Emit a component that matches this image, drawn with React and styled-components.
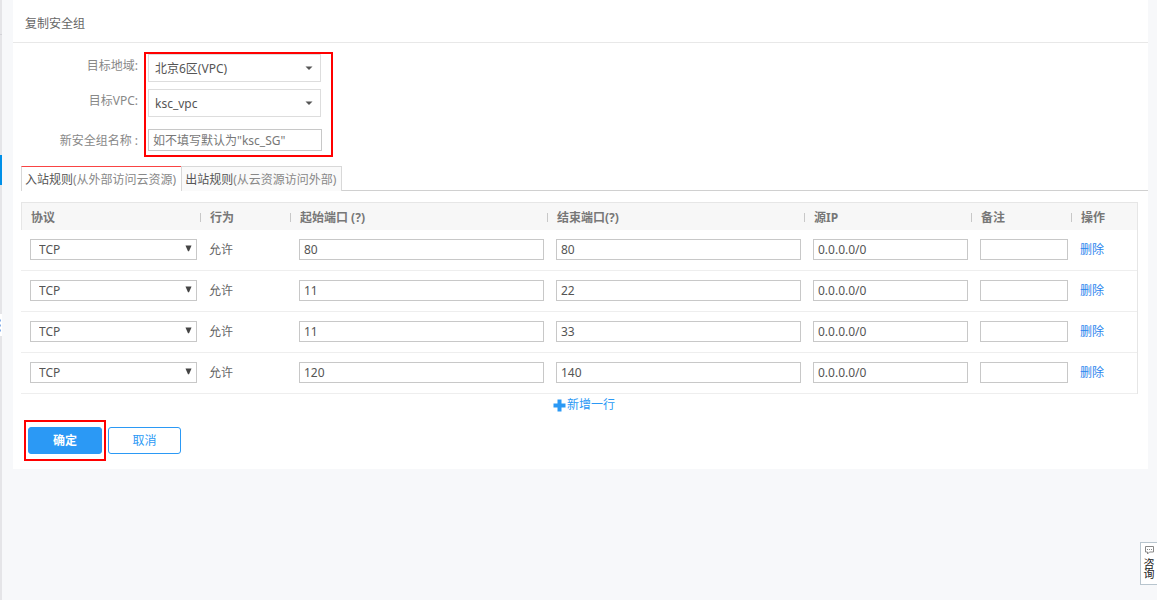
import React, { useState } from "react";
import styled, { createGlobalStyle } from "styled-components";

const GlobalStyle = createGlobalStyle`
  * { box-sizing: border-box; }
  body {
    margin: 0;
    background: #f7f8fa;
    color: #666;
    font: 12px/18px "Noto Sans", "Noto Sans CJK SC", sans-serif;
  }
  button, input, select { font: inherit; color: inherit; margin: 0; }
`;

const Page = styled.div`
  display: flex;
  align-items: flex-start;
  min-height: 100vh;
`;

const Rail = styled.aside`
  flex: none;
  width: 2px;
  align-self: stretch;
  background: #e5e5e8;
`;

const RailDivider = styled.div`
  height: 35px;
  border-bottom: 1px solid #d3d3d8;
`;

const RailActive = styled.div`
  margin-top: 120px;
  height: 30px;
  background: #0090e8;
`;

const RailHandle = styled.div`
  margin-top: 129px;
  height: 22px;
  background: #fff;
  svg { display: block; }
`;

const Panel = styled.main`
  flex: 1;
  min-width: 0;
  margin: 0 9px 0 11px;
  padding-bottom: 8px;
  background: #fff;
`;

const Title = styled.h1`
  margin: 0;
  padding: 15px 12px 9px;
  border-bottom: 1px solid #e8e8e8;
  font-size: 12px;
  line-height: 18px;
  font-weight: 400;
`;

const Form = styled.form`
  display: grid;
  grid-template-columns: 125px 189px;
  grid-template-rows: 32px 32px 35px;
  gap: 3px 6px;
  align-items: center;
  padding-top: 9px;
`;

const FormLabel = styled.label`
  grid-column: 1;
  grid-row: ${(p) => p.$row};
  padding: ${(p) => (p.$raised ? "0 0 4px" : "2px 0 0")};
  text-align: right;
  color: #888;
`;

const Field = styled.div`
  grid-column: 2;
  grid-row: ${(p) => p.$row};
  padding-left: 4px;
`;

const Highlight = styled.div`
  grid-column: 2;
  grid-row: 1 / 4;
  align-self: stretch;
  border: 2px solid #f00;
  pointer-events: none;
`;

const SelectWrap = styled.div`
  position: relative;
  width: ${(p) => p.$width};
  svg {
    position: absolute;
    right: ${(p) => p.$arrowRight}px;
    top: ${(p) => p.$arrowTop}px;
    pointer-events: none;
  }
`;

const LargeSelect = styled.select`
  display: block;
  appearance: none;
  width: 100%;
  height: 28px;
  padding: 2px 20px 0 6px;
  border: 1px solid #ddd;
  border-radius: 0;
  background: #fff;
  color: #555;
`;

const SmallSelect = styled(LargeSelect)`
  height: 21px;
  padding: 0 20px 0 8px;
  border-color: #c8c8c8;
`;

const TextInput = styled.input`
  display: block;
  width: ${(p) => p.$width || "100%"};
  height: ${(p) => p.$height || 21}px;
  padding: 0 4px;
  border: 1px solid #c8c8c8;
  background: #fff;
  color: #555;
  &::placeholder { color: #777; opacity: 1; }
`;

const NameInput = styled(TextInput)`
  padding-top: 2px;
`;

const Tabs = styled.div`
  display: flex;
  margin: 9px 0 11px 8px;
  &::after {
    content: "";
    flex: 1;
    border-bottom: 1px solid #d0d0d0;
  }
`;

const Tab = styled.button`
  height: 25px;
  padding: 2px 5px 0 3px;
  border: solid #d8d8d8;
  border-width: ${(p) => (p.$active ? "1px 0 0 1px" : "1px 1px 0 1px")};
  border-top-color: ${(p) => (p.$active ? "#f94444" : "#d8d8d8")};
  background: ${(p) => (p.$active ? "#fff" : "#fafafa")};
  color: #555;
  white-space: nowrap;
  cursor: pointer;
`;

const Muted = styled.span`
  color: #888;
`;

const TableArea = styled.div`
  margin: 0 10px 0 8px;
`;

const Table = styled.table`
  width: 100%;
  table-layout: fixed;
  border-collapse: separate;
  border-spacing: 0;
  border-right: 1px solid #e6e6e6;
`;

const Col = styled.col`
  width: ${(p) => p.$w};
`;

const Th = styled.th`
  height: 28px;
  padding: 0;
  border-top: 1px solid #e6e6e6;
  background: #f7f7f7;
  color: #777;
  text-align: left;
  &:first-child { border-left: 1px solid #e6e6e6; }
`;

const ThLabel = styled.span`
  display: block;
  margin-top: 1px;
  padding-left: 9px;
  border-left: ${(p) => (p.$divided ? "1px solid #c8c8c8" : "0")};
  line-height: 9px;
`;

const Td = styled.td`
  height: 41px;
  padding: 0 3px 1px 9px;
  border-bottom: 1px solid #eee;
`;

const Link = styled.a`
  color: #2b85ee;
  text-decoration: none;
`;

const AddRow = styled.div`
  display: flex;
  justify-content: center;
  padding: 2px 0;
  margin-left: 9px;
`;

const AddButton = styled.button`
  display: flex;
  align-items: center;
  gap: 1px;
  padding: 0;
  border: 0;
  background: none;
  color: #2b99f5;
  cursor: pointer;
`;

const Actions = styled.div`
  display: flex;
  align-items: center;
  gap: 2px;
  padding: 4px 11px 0;
`;

const ButtonHighlight = styled.div`
  padding: 5px 2px;
  border: 2px solid #f00;
`;

const Button = styled.button`
  display: block;
  width: ${(p) => (p.$primary ? 74 : 73)}px;
  height: 27px;
  padding: 0;
  border: 1px solid #2b99f5;
  border-radius: 3px;
  background: ${(p) => (p.$primary ? "#2b99f5" : "#fff")};
  color: ${(p) => (p.$primary ? "#fff" : "#2b99f5")};
  font-weight: ${(p) => (p.$primary ? 700 : 400)};
  cursor: pointer;
`;

const Consult = styled.button`
  position: fixed;
  right: 0;
  bottom: 15px;
  display: flex;
  flex-direction: column;
  align-items: center;
  gap: 4px;
  width: 17px;
  height: 43px;
  padding: 3px 0 0;
  border: 1px solid #b8c5ce;
  border-right: 0;
  background: #fff;
  color: #222;
  font-size: 11px;
  line-height: 10px;
  cursor: pointer;
`;

const ConsultText = styled.span`
  width: 11px;
  word-break: break-all;
`;

const Caret = () => (
  <svg width="8" height="4" viewBox="0 0 8 4" aria-hidden="true">
    <path d="M0.5 0.5h7L4 4z" fill="#555" />
  </svg>
);

const Triangle = () => (
  <svg width="7" height="7" viewBox="0 0 7 7" aria-hidden="true">
    <path d="M0.5 0.5h6L4 6.2H3z" fill="#444" />
  </svg>
);

const Plus = () => (
  <svg width="13" height="13" viewBox="0 0 13 13" aria-hidden="true">
    <path d="M4.5 0.5h4v4h4v4h-4v4h-4v-4h-4v-4h4z" fill="#2b99f5" />
  </svg>
);

const Bubble = () => (
  <svg width="9" height="9" viewBox="0 0 9 9" fill="none" stroke="#888" aria-hidden="true">
    <path d="M0.5 0.5h8v5.5h-4L2.5 8V6h-2z" />
    <path d="M2 3.5h1M4 3.5h1M6 3.5h1" />
  </svg>
);

const columns = [
  { label: "协议", w: "179px" },
  { label: "行为", w: "90px" },
  { label: "起始端口 (?)", w: "auto" },
  { label: "结束端口(?)", w: "auto" },
  { label: "源IP", w: "167px" },
  { label: "备注", w: "100px" },
  { label: "操作", w: "66px" },
];

const initialRules = [
  { id: 1, from: "80", to: "80" },
  { id: 2, from: "11", to: "22" },
  { id: 3, from: "11", to: "33" },
  { id: 4, from: "120", to: "140" },
];

const tabs = [
  ["入站规则", "(从外部访问云资源)"],
  ["出站规则", "(从云资源访问外部)"],
];

function RuleRow({ rule, onRemove }) {
  return (
    <tr>
      <Td>
        <SelectWrap $width="100%" $arrowRight={5} $arrowTop={6}>
          <SmallSelect aria-label="协议" defaultValue="TCP">
            <option>TCP</option>
            <option>UDP</option>
            <option>ICMP</option>
          </SmallSelect>
          <Triangle />
        </SelectWrap>
      </Td>
      <Td>允许</Td>
      <Td><TextInput aria-label="起始端口" defaultValue={rule.from} /></Td>
      <Td><TextInput aria-label="结束端口" defaultValue={rule.to} /></Td>
      <Td><TextInput aria-label="源IP" defaultValue="0.0.0.0/0" /></Td>
      <Td><TextInput aria-label="备注" /></Td>
      <Td>
        <Link href="#" onClick={(e) => { e.preventDefault(); onRemove(rule.id); }}>删除</Link>
      </Td>
    </tr>
  );
}

export default function App() {
  const [rules, setRules] = useState(initialRules);
  const [active, setActive] = useState(0);
  const remove = (id) => setRules(rules.filter((r) => r.id !== id));
  const add = () => setRules([...rules, { id: Date.now(), from: "", to: "" }]);

  return (
    <>
      <GlobalStyle />
      <Page>
        <Rail>
          <RailDivider />
          <RailActive />
          <RailHandle>
            <svg width="2" height="22" viewBox="0 0 2 22" aria-hidden="true">
              <path d="M0 6.5h1M0 11.5h1M0 16.5h1" stroke="#85aee8" strokeWidth="2" />
            </svg>
          </RailHandle>
        </Rail>
        <Panel>
          <Title>复制安全组</Title>
          <Form>
            <FormLabel $row={1} $raised htmlFor="region">目标地域:</FormLabel>
            <Field $row={1}>
              <SelectWrap $width="173px" $arrowRight={8} $arrowTop={12}>
                <LargeSelect id="region"><option>北京6区(VPC)</option></LargeSelect>
                <Caret />
              </SelectWrap>
            </Field>
            <FormLabel $row={2} $raised htmlFor="vpc">目标VPC:</FormLabel>
            <Field $row={2}>
              <SelectWrap $width="173px" $arrowRight={8} $arrowTop={12}>
                <LargeSelect id="vpc"><option>ksc_vpc</option></LargeSelect>
                <Caret />
              </SelectWrap>
            </Field>
            <FormLabel $row={3} htmlFor="name">新安全组名称 :</FormLabel>
            <Field $row={3}>
              <NameInput id="name" $width="174px" $height={22} placeholder={'如不填写默认为"ksc_SG"'} />
            </Field>
            <Highlight />
          </Form>
          <Tabs role="tablist">
            {tabs.map(([name, note], i) => (
              <Tab key={name} type="button" role="tab" aria-selected={i === active}
                $active={i === active} onClick={() => setActive(i)}>
                {name}<Muted>{note}</Muted>
              </Tab>
            ))}
          </Tabs>
          <TableArea>
            <Table>
              <colgroup>{columns.map((c) => <Col key={c.label} $w={c.w} />)}</colgroup>
              <thead>
                <tr>
                  {columns.map((c, i) => (
                    <Th key={c.label} scope="col"><ThLabel $divided={i > 0}>{c.label}</ThLabel></Th>
                  ))}
                </tr>
              </thead>
              <tbody>
                {rules.map((r) => <RuleRow key={r.id} rule={r} onRemove={remove} />)}
              </tbody>
            </Table>
            <AddRow>
              <AddButton type="button" onClick={add}><Plus />新增一行</AddButton>
            </AddRow>
          </TableArea>
          <Actions>
            <ButtonHighlight><Button type="button" $primary>确定</Button></ButtonHighlight>
            <Button type="button">取消</Button>
          </Actions>
        </Panel>
        <Consult type="button">
          <Bubble />
          <ConsultText>咨询</ConsultText>
        </Consult>
      </Page>
    </>
  );
}
